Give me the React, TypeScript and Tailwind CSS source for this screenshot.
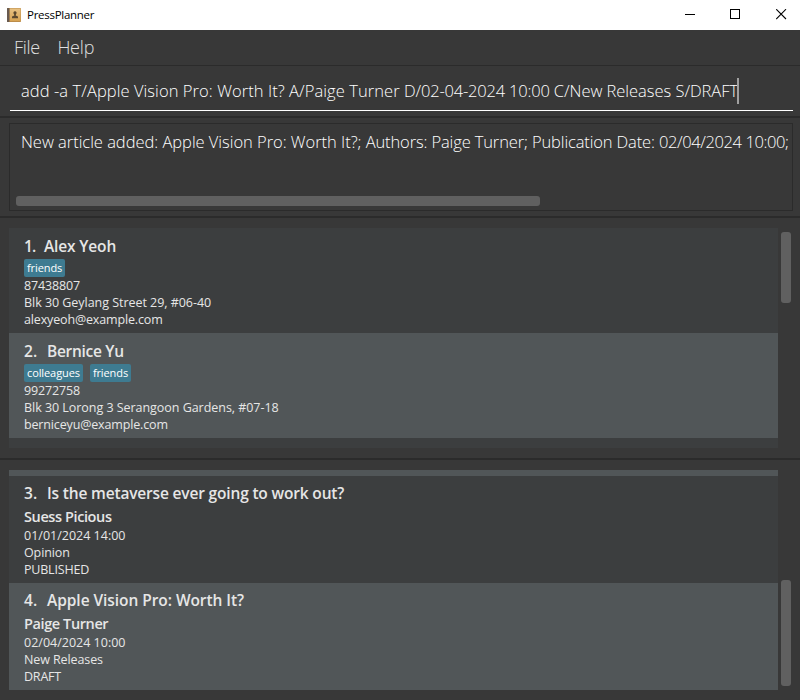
import React from "react";

type Person = {
  index: number;
  name: string;
  nameClass: string;
  numberClass: string;
  tags: string[];
  phone: string;
  address: string;
  email: string;
  background: string;
};

type Article = {
  index: number;
  title: string;
  titleClass: string;
  author: string;
  date: string;
  category: string;
  status: string;
  background: string;
};

const people: Person[] = [
  {
    index: 1,
    name: "Alex Yeoh",
    nameClass: "tracking-[-0.15px]",
    numberClass: "w-5 tracking-[-1px]",
    tags: ["friends"],
    phone: "87438807",
    address: "Blk 30 Geylang Street 29, #06-40",
    email: "alexyeoh@example.com",
    background: "bg-[#3c3e3f]",
  },
  {
    index: 2,
    name: "Bernice Yu",
    nameClass: "tracking-[-0.3px]",
    numberClass: "w-[23px]",
    tags: ["colleagues", "friends"],
    phone: "99272758",
    address: "Blk 30 Lorong 3 Serangoon Gardens, #07-18",
    email: "berniceyu@example.com",
    background: "bg-[#515658]",
  },
];

const articles: Article[] = [
  {
    index: 3,
    title: "Is the metaverse ever going to work out?",
    titleClass: "tracking-[-0.17px]",
    author: "Suess Picious",
    date: "01/01/2024 14:00",
    category: "Opinion",
    status: "PUBLISHED",
    background: "bg-[#3c3e3f]",
  },
  {
    index: 4,
    title: "Apple Vision Pro: Worth It?",
    titleClass: "tracking-[-0.06px]",
    author: "Paige Turner",
    date: "02/04/2024 10:00",
    category: "New Releases",
    status: "DRAFT",
    background: "bg-[#515658]",
  },
];

function AppIcon() {
  return (
    <svg width="14" height="14" viewBox="0 0 14 14">
      <defs>
        <linearGradient id="cover" x1="0" y1="0" x2="0" y2="1">
          <stop offset="0" stopColor="#e8c283" />
          <stop offset="1" stopColor="#d6a252" />
        </linearGradient>
      </defs>
      <rect width="14" height="14" rx="0.8" fill="#b98a48" />
      <rect x="2.6" y="0.5" width="11" height="12.6" fill="url(#cover)" />
      <rect width="2.4" height="14" rx="0.6" fill="#685a50" />
      <path d="M8 3.200a1.700 1.700 0 0 1 1 3l-.3 1.400 2.300 1v1.600H5V8.600l2.300-1L7 6.200a1.700 1.700 0 0 1 1-3Z" fill="#5b482f" />
    </svg>
  );
}

function TitleBar() {
  return (
    <header className="flex h-[30px] shrink-0 items-center bg-white pl-[7px] text-black">
      <AppIcon />
      <span className="ml-1.5 grow text-[11.5px] tracking-[-0.28px]">PressPlanner</span>
      <div className="flex items-center gap-[35px] pr-[13px] pb-0.5">
        <svg width="11" height="11" viewBox="0 0 11 11" shapeRendering="crispEdges">
          <path d="M1 5.500h10" stroke="black" />
        </svg>
        <svg width="11" height="11" viewBox="0 0 11 11" shapeRendering="crispEdges">
          <rect x="0.500" y="0.500" width="9" height="9" fill="white" stroke="black" />
        </svg>
        <svg width="11" height="11" viewBox="0 0 11 11">
          <path d="M0.200 0.200l9.800 9.800M10 0.200l-9.800 9.800" stroke="black" strokeWidth="1.100" />
        </svg>
      </div>
    </header>
  );
}

function MenuBar() {
  return (
    <nav className="flex h-9 shrink-0 items-center gap-[17.5px] border-b border-[#2b2b2b] pl-3.5 text-[18px] font-light text-[#e0e0e0]">
      <span className="tracking-[-0.3px]">File</span>
      <span className="tracking-[-0.2px]">Help</span>
    </nav>
  );
}

function ScrollList({ className, thumbClass, children }: { className: string; thumbClass: string; children: React.ReactNode }) {
  return (
    <div className="flex gap-[3px] pl-[9px]">
      <div className={`w-[769px] overflow-hidden bg-[#3c3e3f] ${className}`}>{children}</div>
      <div className={`w-2.5 rounded-[3px] bg-[#606060] ${thumbClass}`} />
    </div>
  );
}

function PersonCard({ person }: { person: Person }) {
  return (
    <div className={`h-[105px] pt-2 pl-[15px] ${person.background}`}>
      <h2 className="flex h-[22px] items-center text-[15.5px] font-semibold">
        <span className={person.numberClass}>{person.index}.</span>
        <span className={person.nameClass}>{person.name}</span>
      </h2>
      <div className="mt-px flex h-[18px] gap-[7px]">
        {person.tags.map((tag) => (
          <span key={tag} className="flex h-[18px] items-center rounded-xs bg-[#3e7b91] px-[3px] text-[11px] tracking-[-0.1px] text-white">
            {tag}
          </span>
        ))}
      </div>
      <div className="text-[12.5px] leading-[17px]">
        <p className="tracking-[-0.15px]">{person.phone}</p>
        <p className="tracking-[-0.04px]">{person.address}</p>
        <p className="tracking-[-0.15px]">{person.email}</p>
      </div>
    </div>
  );
}

function ArticleCard({ article }: { article: Article }) {
  return (
    <div className={`h-[107px] pt-[7px] pl-[15px] ${article.background}`}>
      <h2 className="flex h-[22px] items-center text-[15.5px] font-semibold">
        <span className="w-[23px]">{article.index}.</span>
        <span className={article.titleClass}>{article.title}</span>
      </h2>
      <h3 className="mt-px flex h-[21px] items-center text-[14.5px] font-semibold tracking-[-0.4px]">{article.author}</h3>
      <div className="text-[12.5px] leading-[17px]">
        <p>{article.date}</p>
        <p className="tracking-[-0.1px]">{article.category}</p>
        <p className="tracking-[-0.2px]">{article.status}</p>
      </div>
    </div>
  );
}

export default function App() {
  return (
    <div className="flex h-[700px] w-[800px] flex-col overflow-hidden bg-[#383838] font-['Open_Sans','Noto_Sans',sans-serif] whitespace-nowrap text-[#e6e6e6]">
      <TitleBar />
      <MenuBar />

      <section className="h-[52px] shrink-0 border-b-2 border-[#2b2b2b] px-[7px] pt-3 pl-2.5">
        <div className="flex h-[33px] border-b border-white pl-[11px]">
          <span className="text-[16.5px] leading-[26px] font-light text-white">
            <span className="tracking-[0.07px]">add -a T/Apple Vision Pro: Worth It? A/Paige Turner </span>
            <span className="tracking-[-0.2px]">D/02-04-2024 10:00 </span>
            <span className="tracking-[-0.03px]">C/New Releases S/DRAFT</span>
          </span>
          <span className="-ml-px h-[26px] w-0.5 bg-[#a0a0a0]" />
        </div>
      </section>

      <section className="h-[100px] shrink-0 border-b-2 border-[#2b2b2b] pt-[5px] pr-[7px] pl-[9px]">
        <div className="flex h-[88px] flex-col justify-between overflow-hidden border border-[#2b2b2b] pt-[5px] pb-1 pl-[11px]">
          <p className="text-[16.5px] leading-[26px] font-light tracking-[-0.13px] text-white">
            <span className="tracking-[-0.03px]">New article added: Apple Vision Pro: Worth It?; </span>
            Authors: Paige Turner; Publication Date: <span className="tracking-[-0.4px]">02/04/2024 10:00;</span>
          </p>
          <div className="-ml-[5px] h-2.5 w-[524px] rounded-[3px] bg-[#606060]" />
        </div>
      </section>

      <section className="h-[242px] shrink-0 border-b-2 border-[#2b2b2b] pt-2.5">
        <ScrollList className="h-[220px]" thumbClass="mt-1 h-[71px]">
          {people.map((person) => (
            <PersonCard key={person.index} person={person} />
          ))}
        </ScrollList>
      </section>

      <section className="grow pt-2.5">
        <ScrollList className="h-[220px]" thumbClass="mt-[110px] h-[106px]">
          <div className="h-1.5 bg-[#515658]" />
          {articles.map((article) => (
            <ArticleCard key={article.index} article={article} />
          ))}
        </ScrollList>
      </section>
    </div>
  );
}
